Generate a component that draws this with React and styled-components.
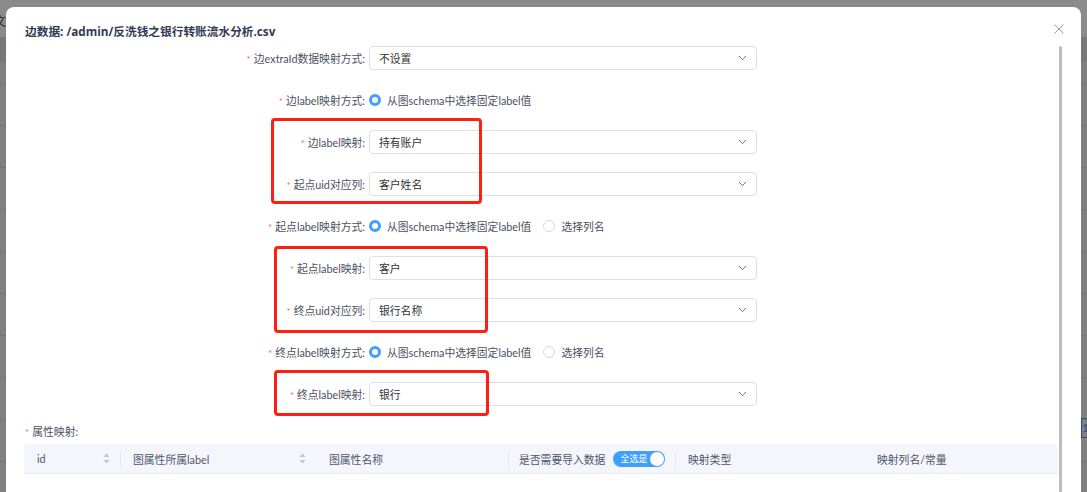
import React from "react";
import styled, { createGlobalStyle } from "styled-components";

const GlobalStyle = createGlobalStyle`
  html, body {
    margin: 0;
    padding: 0;
    height: 492px;
    overflow: hidden;
  }
  body {
    font-family: Lato, "Noto Sans CJK SC", sans-serif;
  }
`;

const Backdrop = styled.div`
  position: relative;
  width: 1087px;
  height: 492px;
  overflow: hidden;
  background:
    linear-gradient(#8a8a8a 0 37px, #787878 37px 62px, transparent 62px),
    repeating-linear-gradient(
      to bottom,
      #808080 0 41px,
      #747474 41px 42px
    );
  background-color: #808080;
  padding-top: 7px;
  padding-left: 6px;
  box-sizing: border-box;
`;

const BgText = styled.span`
  position: absolute;
  left: -6px;
  top: 12px;
  font-size: 12px;
  color: #2a2a2a;
  font-family: "Noto Sans CJK SC", sans-serif;
`;

const BgBadge = styled.span`
  position: absolute;
  right: -4px;
  top: 418px;
  width: 8px;
  height: 18px;
  border: 1px solid #2d4f86;
  font-size: 12px;
  color: #2d4f86;
  line-height: 18px;
`;

const Modal = styled.div`
  width: 1075px;
  height: 520px;
  background: #fff;
  border-radius: 8px;
  display: flex;
  flex-direction: column;
  box-sizing: border-box;
  padding: 0 17px 0 18px;
`;

const Header = styled.div`
  height: 39px;
  display: flex;
  align-items: flex-start;
  justify-content: space-between;
  padding-top: 15px;
  box-sizing: border-box;
`;

const Title = styled.h2`
  margin: 0 0 0 1px;
  font-size: 11.7px;
  line-height: 18px;
  font-weight: 700;
  color: #323a56;
  font-family: "Open Sans", "Noto Sans CJK SC", sans-serif;
`;

const Close = styled.button`
  border: 0;
  background: none;
  padding: 0;
  margin-top: 2px;
  width: 10px;
  height: 10px;
  cursor: pointer;
  display: flex;
`;

const Scroller = styled.div`
  flex: 1;
  display: flex;
  gap: 1px;
  min-height: 0;
`;

const Content = styled.div`
  position: relative;
  width: 1034px;
`;

const ScrollThumb = styled.div`
  width: 3px;
  background: #bdbdbd;
  border-radius: 2px 2px 0 0;
`;

const Row = styled.div`
  display: grid;
  grid-template-columns: 341px 388px;
  column-gap: 4px;
  align-items: center;
  height: 24px;
  margin-bottom: 18px;
`;

const Label = styled.label`
  text-align: right;
  font-size: 10.8px;
  color: #4c5163;
  white-space: nowrap;
`;

const Star = styled.span`
  color: #f56c6c;
  margin-right: 3px;
  font-size: 10px;
`;

const Select = styled.div`
  height: 24px;
  box-sizing: border-box;
  border: 1px solid #dcdfe6;
  border-radius: 4px;
  display: flex;
  align-items: center;
  justify-content: space-between;
  padding: 0 9px 0 9px;
  font-size: 10.8px;
  color: #333;
  font-family: "Noto Sans CJK SC", sans-serif;
`;

const RadioGroup = styled.div`
  display: flex;
  align-items: center;
  gap: 12px;
  white-space: nowrap;
`;

const RadioItem = styled.span`
  display: flex;
  align-items: center;
  gap: 6px;
  font-size: 10.8px;
  color: #4c5163;
`;

const RadioDot = styled.span`
  width: 12px;
  height: 12px;
  box-sizing: border-box;
  border-radius: 50%;
  border: ${(p) => (p.checked ? "3.5px solid #409eff" : "1px solid #d4d7de")};
  background: #fff;
`;

const SectionLabel = styled.div`
  font-size: 10.8px;
  line-height: 16px;
  color: #4c5163;
  padding-left: 1px;
`;

const TableHead = styled.div`
  margin-top: 4px;
  height: 29px;
  background: #f5f6fb;
  border-bottom: 1px solid #ebeef5;
  border-radius: 4px 4px 0 0;
  display: grid;
  grid-template-columns: 96px 196px 192px 167px 189px 194px;
  align-items: center;
`;

const Th = styled.div`
  position: relative;
  height: 100%;
  display: flex;
  align-items: center;
  justify-content: space-between;
  padding: 0 ${(p) => (p.sortable ? "10px" : "0")} 0 ${(p) => p.pad || 13}px;
  font-size: 10.8px;
  color: #4f556b;
  white-space: nowrap;

  &::before {
    content: "";
    display: ${(p) => (p.divider ? "block" : "none")};
    position: absolute;
    left: 0;
    top: 7px;
    width: 1px;
    height: 16px;
    background: #e4e6ee;
  }
`;

const ThInner = styled.span`
  display: flex;
  align-items: center;
  gap: 8px;
`;

const Switch = styled.span`
  display: inline-flex;
  align-items: center;
  justify-content: space-between;
  width: 52px;
  height: 16px;
  border-radius: 8px;
  background: #409eff;
  padding: 0 1px 0 7px;
  box-sizing: border-box;
  color: #fff;
  font-size: 9px;
`;

const Knob = styled.span`
  width: 14px;
  height: 14px;
  border-radius: 50%;
  background: #fff;
`;

const Mark = styled.div`
  position: absolute;
  border: 3.5px solid #ff1e12;
  border-radius: 4px;
  box-sizing: border-box;
  pointer-events: none;
`;

function Chevron() {
  return (
    <svg width="9" height="6" viewBox="0 0 9 6">
      <path d="M1 1 L4.5 4.6 L8 1" fill="none" stroke="#6b7080" strokeWidth="1" />
    </svg>
  );
}

function SortIcon() {
  return (
    <svg width="7" height="11" viewBox="0 0 7 11">
      <path d="M3.5 0.5 L6.5 4 L0.5 4 Z" fill="#c0c4cc" />
      <path d="M3.5 10.5 L6.5 7 L0.5 7 Z" fill="#c0c4cc" />
    </svg>
  );
}

// annotation boxes drawn over the form, relative to the content area
const marks = [
  { left: 247, top: 72, width: 211, height: 86 },
  { left: 250, top: 200, width: 214, height: 87 },
  { left: 250, top: 324, width: 215, height: 46 },
];

function SelectRow({ label, value }) {
  return (
    <Row>
      <Label>
        <Star>*</Star>
        {label}:
      </Label>
      <Select>
        <span>{value}</span>
        <Chevron />
      </Select>
    </Row>
  );
}

function RadioRow({ label, both }) {
  return (
    <Row>
      <Label>
        <Star>*</Star>
        {label}:
      </Label>
      <RadioGroup>
        <RadioItem>
          <RadioDot checked />
          从图schema中选择固定label值
        </RadioItem>
        {both && (
          <RadioItem>
            <RadioDot />
            选择列名
          </RadioItem>
        )}
      </RadioGroup>
    </Row>
  );
}

export default function App() {
  return (
    <Backdrop>
      <GlobalStyle />
      <BgText>文</BgText>
      <BgBadge>1</BgBadge>
      <Modal>
        <Header>
          <Title>边数据: /admin/反洗钱之银行转账流水分析.csv</Title>
          <Close aria-label="close">
            <svg width="10" height="10" viewBox="0 0 10 10">
              <path d="M0.5 0.5 L9.5 9.5 M9.5 0.5 L0.5 9.5" stroke="#9a9a9a" strokeWidth="1" />
            </svg>
          </Close>
        </Header>
        <Scroller>
          <Content>
            <SelectRow label="边extraId数据映射方式" value="不设置" />
            <RadioRow label="边label映射方式" />
            <SelectRow label="边label映射" value="持有账户" />
            <SelectRow label="起点uid对应列" value="客户姓名" />
            <RadioRow label="起点label映射方式" both />
            <SelectRow label="起点label映射" value="客户" />
            <SelectRow label="终点uid对应列" value="银行名称" />
            <RadioRow label="终点label映射方式" both />
            <SelectRow label="终点label映射" value="银行" />
            <SectionLabel>
              <Star>*</Star>属性映射:
            </SectionLabel>
            <TableHead>
              <Th sortable>
                <span>id</span>
                <SortIcon />
              </Th>
              <Th sortable divider>
                <span>图属性所属label</span>
                <SortIcon />
              </Th>
              <Th>图属性名称</Th>
              <Th divider pad={11}>
                <ThInner>
                  是否需要导入数据
                  <Switch>
                    全选是
                    <Knob />
                  </Switch>
                </ThInner>
              </Th>
              <Th divider>映射类型</Th>
              <Th>映射列名/常量</Th>
            </TableHead>
            {marks.map((m, i) => (
              <Mark key={i} style={m} />
            ))}
          </Content>
          <ScrollThumb />
        </Scroller>
      </Modal>
    </Backdrop>
  );
}
